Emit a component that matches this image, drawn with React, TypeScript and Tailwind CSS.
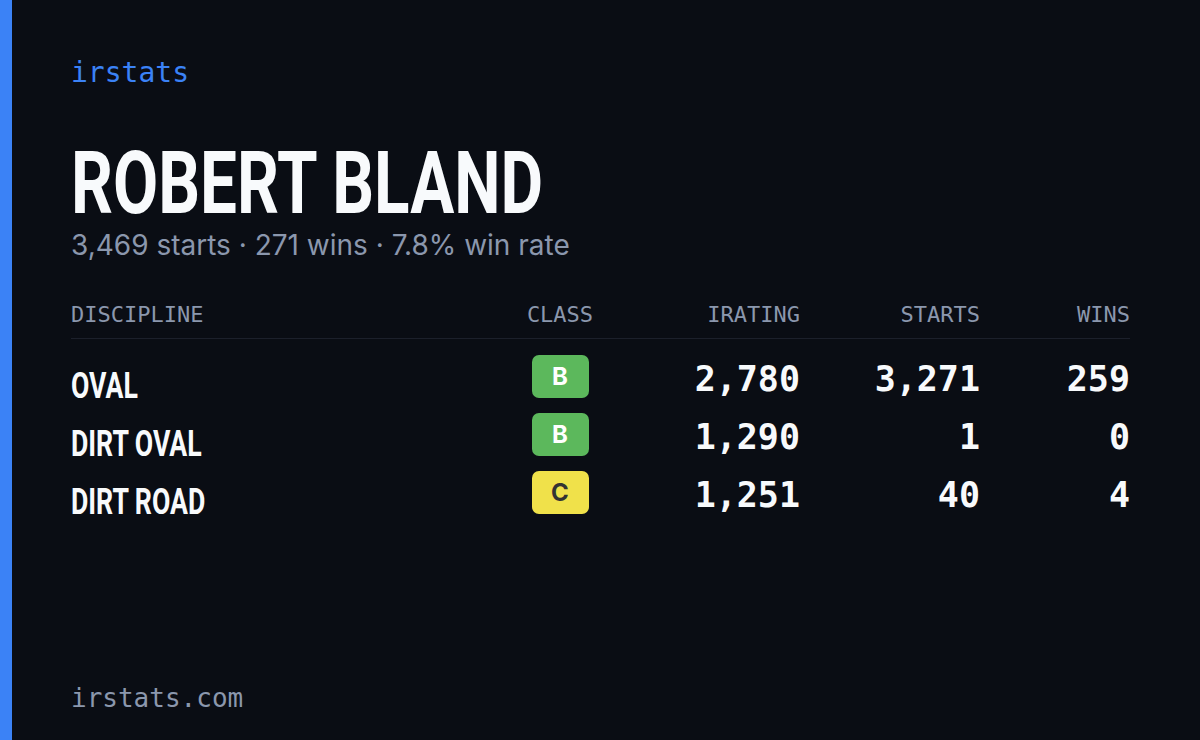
import React from "react";

const rows = [
  { name: "OVAL", cls: "B", ir: "2,780", starts: "3,271", wins: "259" },
  { name: "DIRT OVAL", cls: "B", ir: "1,290", starts: "1", wins: "0" },
  { name: "DIRT ROAD", cls: "C", ir: "1,251", starts: "40", wins: "4" },
];

const mono = "font-['DejaVu_Sans_Mono','Liberation_Mono',monospace]";
const cond = "font-['Roboto',sans-serif]";

export default function App() {
  return (
    <div className="flex h-[740px] w-[1200px] bg-[#0a0d14]">
      <div className="w-[12px] shrink-0 bg-[#3b82f6]" />
      <div className="flex flex-1 flex-col pl-[59px] pr-[70px]">
        <div className={`${mono} mt-[56px] text-[28px] leading-[34px] text-[#3b82f6]`}>irstats</div>
        <div className={`${cond} mt-[50px] origin-left scale-x-[0.745] whitespace-nowrap text-[88px] font-bold leading-[86px] text-[#f8fafc]`}>
          ROBERT BLAND
        </div>
        <div className="mt-[2px] font-['Inter',sans-serif] text-[28px] leading-[34px] text-[#8b97ad]">
          3,469 starts · 271 wins · 7.8% win rate
        </div>
        <div className={`${mono} mt-[39px] grid grid-cols-[1fr_140px_170px_180px_150px] border-b border-[#1c202b] pb-[9px] text-[22px] leading-[28px] text-[#8b97ad]`}>
          <div>DISCIPLINE</div>
          <div className="text-center">CLASS</div>
          <div className="text-right">IRATING</div>
          <div className="text-right">STARTS</div>
          <div className="text-right">WINS</div>
        </div>
        <div className="mt-[16px] flex flex-col gap-[15px]">
          {rows.map((r) => (
            <div key={r.name} className="grid h-[43px] grid-cols-[1fr_140px_170px_180px_150px] items-start">
              <div className={`${cond} mt-[11px] origin-left scale-x-[0.74] whitespace-nowrap text-[36px] font-bold leading-[40px] text-[#f8fafc]`}>{r.name}</div>
              <div className="flex justify-center">
                <div
                  className={`flex h-[43px] w-[57px] items-center justify-center rounded-[7px] font-['Inter',sans-serif] text-[24px] font-bold ${
                    r.cls === "B" ? "bg-[#5cb85c] text-white" : "bg-[#f0e14a] text-[#333333]"
                  }`}
                >
                  {r.cls}
                </div>
              </div>
              <div className={`${mono} pt-[3px] text-right text-[35px] font-bold leading-[43px] text-[#f8fafc]`}>{r.ir}</div>
              <div className={`${mono} pt-[3px] text-right text-[35px] font-bold leading-[43px] text-[#f8fafc]`}>{r.starts}</div>
              <div className={`${mono} pt-[3px] text-right text-[35px] font-bold leading-[43px] text-[#f8fafc]`}>{r.wins}</div>
            </div>
          ))}
        </div>
        <div className="flex-1" />
        <div className={`${mono} mb-[26px] text-[26px] leading-[32px] text-[#8b97ad]`}>irstats.com</div>
      </div>
    </div>
  );
}
